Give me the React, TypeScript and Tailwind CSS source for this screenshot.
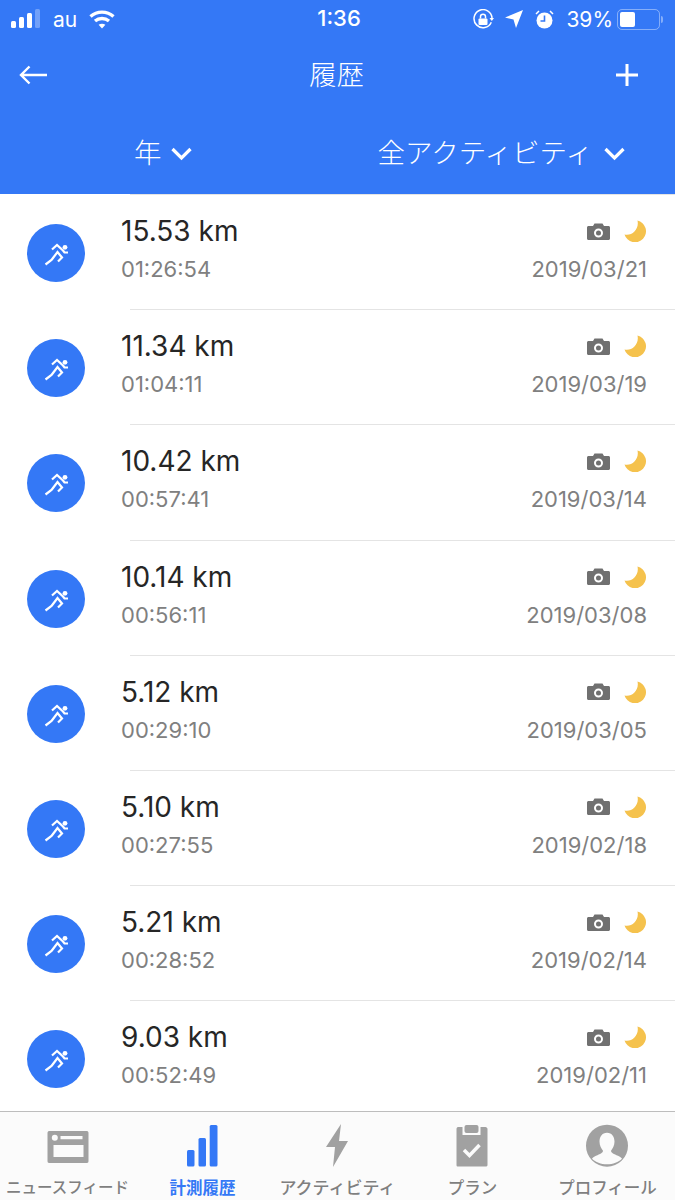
import React from 'react'

const rows = [
  { km: '15.53 km', time: '01:26:54', date: '2019/03/21' },
  { km: '11.34 km', time: '01:04:11', date: '2019/03/19' },
  { km: '10.42 km', time: '00:57:41', date: '2019/03/14' },
  { km: '10.14 km', time: '00:56:11', date: '2019/03/08' },
  { km: '5.12 km', time: '00:29:10', date: '2019/03/05' },
  { km: '5.10 km', time: '00:27:55', date: '2019/02/18' },
  { km: '5.21 km', time: '00:28:52', date: '2019/02/14' },
  { km: '9.03 km', time: '00:52:49', date: '2019/02/11' },
]

function StatusBar() {
  return (
    <div className="flex h-[38px] items-center text-[22px] text-white">
      <div className="flex flex-1 items-center pl-[11px]">
        <svg width="30" height="20" viewBox="0 0 30 20" fill="currentColor">
          <rect x="0" y="12" width="5" height="7" rx="1.5" />
          <rect x="8" y="8" width="5" height="11" rx="1.5" />
          <rect x="16" y="4" width="5" height="15" rx="1.5" />
          <rect x="24" y="0" width="5" height="19" rx="1.5" fillOpacity="0.3" />
        </svg>
        <span className="mx-[12px] text-[21px] leading-none">au</span>
        <svg width="26" height="19" viewBox="0 0 26 19" fill="none" stroke="currentColor" strokeWidth="3.4">
          <path d="M1.5 6.5C8 0.7 18 0.7 24.5 6.5" />
          <path d="M6 11C10 7.7 16 7.7 20 11" />
          <path d="M13 18.5L9.6 14.8C11.6 13.4 14.4 13.4 16.4 14.8Z" fill="currentColor" strokeWidth="0" />
        </svg>
      </div>
      <span className="mb-[1px] ml-[4px] font-medium">1:36</span>
      <div className="flex flex-1 items-center justify-end pr-[12px]">
        <svg width="21" height="21" viewBox="0 0 21 21" fill="none" stroke="currentColor" strokeWidth="1.5">
          <path d="M18.3 13.2A9 9 0 1 1 19 9" />
          <path d="M16.5 9H21L18.8 12Z" fill="currentColor" strokeWidth="0" />
          <rect x="5.5" y="9.5" width="9" height="6.5" rx="1" fill="currentColor" strokeWidth="0" />
          <path d="M7.5 9.5V7.5C7.5 4.5 12.5 4.5 12.5 7.5V9.5" />
        </svg>
        <svg className="ml-[11px]" width="18" height="18" viewBox="0 0 18 18" fill="currentColor">
          <path d="M18 0L11 18L8.5 9.5L0 7.5Z" />
        </svg>
        <svg className="ml-[12px]" width="19" height="19" viewBox="0 0 19 19" fill="currentColor">
          <circle cx="9.5" cy="10.5" r="8" />
          <path d="M1 4L4 1M18 4L15 1" stroke="currentColor" strokeWidth="1.5" />
          <path d="M9.5 5.5V11H5.5" stroke="#3478f6" strokeWidth="1.6" fill="none" />
        </svg>
        <span className="ml-[12px] text-[21px] leading-none">39%</span>
        <div className="ml-[4px] flex h-[21px] w-[43px] items-center rounded-[5px] border-[1.5px] border-white/40 p-[2px]">
          <div className="h-full w-[15px] rounded-[2px] bg-white" />
        </div>
        <div className="ml-[1px] h-[7px] w-[2px] rounded-r-sm bg-white/40" />
      </div>
    </div>
  )
}

function Chevron() {
  return (
    <svg width="21" height="14" viewBox="0 0 21 14" fill="none" stroke="white" strokeWidth="3.2">
      <path d="M1.5 2L10.5 11L19.5 2" />
    </svg>
  )
}

function Header() {
  return (
    <header className="h-[194px] bg-[#3478f6] text-white">
      <StatusBar />
      <div className="grid h-[74px] grid-cols-3 items-center pl-[19px] pr-[36px]">
        <svg width="28" height="20" viewBox="0 0 28 20" fill="none" stroke="white" strokeWidth="2.4">
          <path d="M28 10H2M10.5 1.5L2 10L10.5 18.5" />
        </svg>
        <span className="ml-[15px] pt-[2px] text-center text-[27.5px] font-light">履歴</span>
        <svg className="justify-self-end" width="24" height="24" viewBox="0 0 24 24" fill="none" stroke="white" strokeWidth="3">
          <path d="M12 1V23M1 12H23" />
        </svg>
      </div>
      <div className="grid h-[80px] grid-cols-2 pr-[10px] pt-[4px] text-[27.5px] font-light">
        <div className="flex items-center justify-center gap-[9px] pr-[7px]">
          <span>年</span>
          <Chevron />
        </div>
        <div className="flex items-center justify-center gap-[11px] pl-[5px]">
          <span>全アクティビティ</span>
          <Chevron />
        </div>
      </div>
    </header>
  )
}

function Runner() {
  return (
    <svg width="30" height="30" viewBox="-1 -2 30 30" fill="none" stroke="white" strokeWidth="2.2">
      <circle cx="23" cy="7.3" r="2.4" fill="white" stroke="none" />
      <path d="M10 9.5L15 5L21 10.5L22.5 12.5H26" />
      <path d="M3.5 24.5L9.5 20L11 18L15.5 12L20 17.5L16 21.5" />
    </svg>
  )
}

function Row({ km, time, date }: { km: string; time: string; date: string }) {
  return (
    <div className="h-[115.2px]">
      <div className="ml-[130px] h-px bg-[#e4e4e4]" />
      <div className="flex items-start pl-[27px] pr-[28px]">
        <div className="mt-[29px] flex h-[58px] w-[58px] items-center justify-center rounded-full bg-[#3478f6]">
          <Runner />
        </div>
        <div className="ml-[36px] flex-1">
          <div className="mt-[18px] text-[28px] leading-[36px] text-[#262626]">{km}</div>
          <div className="mt-[7px] text-[22px] leading-[26px] text-[#808080]">{time}</div>
        </div>
        <div className="flex flex-col items-end">
          <div className="mt-[25px] flex h-[22px] items-center">
            <svg width="23" height="17" viewBox="0 0 23 17" fill="#707070">
              <path fillRule="evenodd" d="M1.5 3H6L7.5 0.5H15.5L17 3H21.5C22.3 3 23 3.7 23 4.5V15.5C23 16.3 22.3 17 21.5 17H1.5C.7 17 0 16.3 0 15.5V4.5C0 3.7.7 3 1.5 3ZM11.5 5.5A4.5 4.5 0 1 0 11.5 14.5A4.5 4.5 0 1 0 11.5 5.5ZM11.5 7.5A2.5 2.5 0 1 1 11.5 12.5A2.5 2.5 0 1 1 11.5 7.5Z" />
            </svg>
            <svg className="ml-[14px] mr-[1px]" width="22" height="22" viewBox="0 0 22 22" fill="#f5c24d">
              <path d="M13.5 0.5A11 11 0 1 1 0.5 14.5C7.5 16.5 15.5 9.5 13.5 0.5Z" />
            </svg>
          </div>
          <div className="mt-[14px] text-[22px] leading-[26px] text-[#808080]">{date}</div>
        </div>
      </div>
    </div>
  )
}

const tabIconClass = 'h-[44px] w-[44px]'

function TabBar() {
  const gray = '#a1a1a1'
  return (
    <nav className="grid h-[89px] grid-cols-5 border-t border-[#bdbdbd] bg-[#fbfbfb] text-[16.5px] font-medium text-[#7f7f7f]">
      <div className="flex flex-col items-center pt-[12px]">
        <svg className={tabIconClass} viewBox="0 0 44 44" fill={gray}>
          <path fillRule="evenodd" d="M3 7H41C42 7 42.500 8 42.500 9V37C42.500 38 42 39 41 39H3C2 39 1.500 38 1.500 37V9C1.500 8 2 7 3 7ZM7.500 21V33H37.500V21ZM14.500 12V15.300H36.500V12Z" />
          <circle cx="8.800" cy="13.700" r="3" fill="#fbfbfb" />
        </svg>
        <span className="mt-[10px] whitespace-nowrap text-[15.5px] leading-[20px]">ニュースフィード</span>
      </div>
      <div className="flex flex-col items-center pt-[12px] text-[#3478f6]">
        <svg className={tabIconClass} viewBox="0 0 44 44" fill="#3478f6">
          <rect x="6" y="26" width="7.500" height="16.600" rx="1.500" />
          <rect x="17.500" y="14" width="7.500" height="28.600" rx="1.500" />
          <rect x="28.700" y="1" width="7.800" height="41.600" rx="1.500" />
        </svg>
        <span className="mt-[10px] whitespace-nowrap font-bold leading-[20px]">計測履歴</span>
      </div>
      <div className="flex flex-col items-center pt-[12px]">
        <svg className={tabIconClass} viewBox="0 0 44 44" fill={gray}>
          <path d="M25 0L10 23H19L17 43L32 17H23Z" />
        </svg>
        <span className="mt-[10px] whitespace-nowrap text-[17px] leading-[20px]">アクティビティ</span>
      </div>
      <div className="flex flex-col items-center pt-[12px]">
        <svg className={tabIconClass} viewBox="0 0 44 44" fill={gray}>
          <path d="M7 3H11.500V11H29.500V3H34.500C35.500 3 36.500 4 36.500 5V41C36.500 42 35.500 42.600 34.500 42.600H7C6 42.600 5.500 42 5.500 41V5C5.500 4 6 3 7 3Z" />
          <rect x="13.500" y="1" width="14" height="8" rx="2" />
          <path d="M13 26L18.500 31.500L28.500 21" fill="none" stroke="#fbfbfb" strokeWidth="3.500" />
        </svg>
        <span className="mt-[10px] whitespace-nowrap leading-[20px]">プラン</span>
      </div>
      <div className="flex flex-col items-center pt-[12px]">
        <svg className={tabIconClass} viewBox="1 -0.700 44 44" fill={gray}>
          <path fillRule="evenodd" d="M22 0A21 21 0 1 1 22 42A21 21 0 1 1 22 0ZM22 8C17 8 14.500 12 14.500 17C14.500 21 16.500 24 18 26C18 28 15 29.500 11 31C9 32 7.500 33 7 34C10.500 37.500 16 39.500 22 39.500C28 39.500 33.500 37.500 37 34C36.500 33 35 32 33 31C29 29.500 26 28 26 26C27.500 24 29.500 21 29.500 17C29.500 12 27 8 22 8Z" />
        </svg>
        <span className="mt-[10px] whitespace-nowrap leading-[20px]">プロフィール</span>
      </div>
    </nav>
  )
}

export default function App() {
  return (
    <div className="flex h-[1200px] w-[675px] flex-col overflow-hidden bg-white font-['Inter','Noto_Sans_CJK_JP',sans-serif]">
      <Header />
      <main className="flex-1 overflow-hidden">
        {rows.map(r => (
          <Row key={r.date} {...r} />
        ))}
      </main>
      <TabBar />
    </div>
  )
}
